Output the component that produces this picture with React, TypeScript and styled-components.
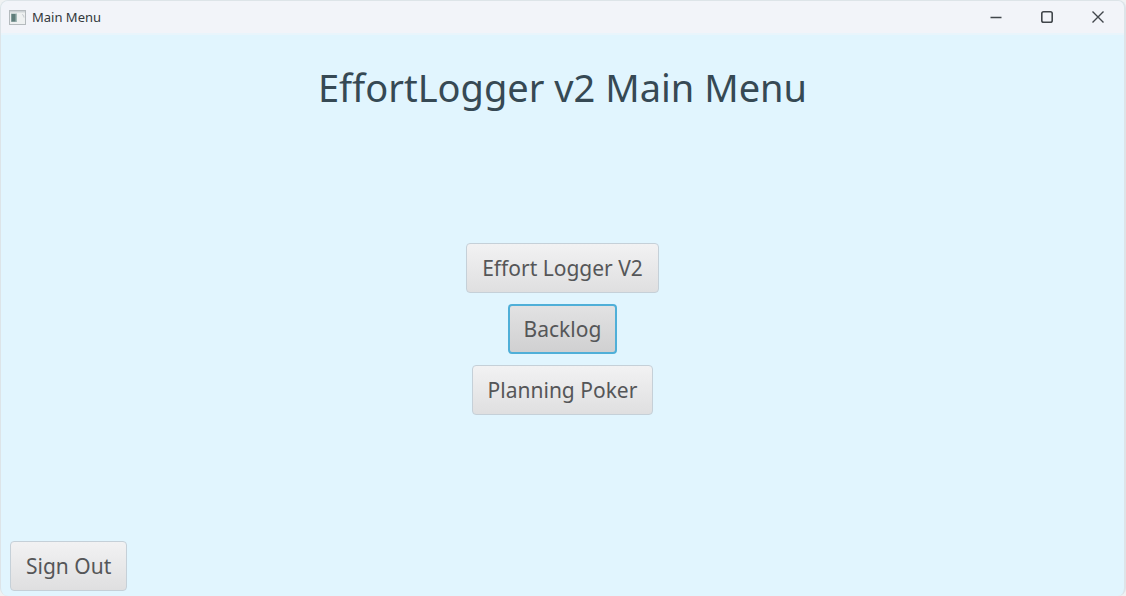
import React from "react";
import styled, { createGlobalStyle, css } from "styled-components";

const GlobalStyle = createGlobalStyle`
  * { box-sizing: border-box; }
  body {
    margin: 0;
    background: #f0f2f3;
    font-family: "Segoe UI", "Noto Sans", sans-serif;
  }
`;

const Window = styled.div`
  display: flex;
  flex-direction: column;
  min-height: 100vh;
  border: 1px solid #dde4e8;
  border-right-width: 2px;
  border-bottom: 0;
  border-radius: 8px;
  background: #e1f5fe;
  overflow: hidden;
`;

const TitleBar = styled.header`
  display: flex;
  align-items: center;
  justify-content: space-between;
  height: 32px;
  padding: 0 1px 0 8px;
  background: #f2f4f9;
`;

const Caption = styled.div`
  display: flex;
  align-items: center;
  gap: 6px;
  color: #33383c;
  font-size: 13px;
  line-height: 16px;
`;

const WindowControls = styled.div`
  display: flex;
  height: 100%;
`;

const ControlButton = styled.button`
  display: flex;
  align-items: center;
  justify-content: center;
  width: 51px;
  padding: 0;
  border: 0;
  background: transparent;
  color: #41464b;
`;

const Content = styled.main`
  display: flex;
  flex: 1;
  flex-direction: column;
  border-top: 2px solid #e9f5fc;
`;

const Heading = styled.h1`
  margin: 24px 0 0;
  color: #364954;
  font-size: 38px;
  font-weight: 400;
  line-height: 56px;
  text-align: center;
`;

const Menu = styled.nav`
  display: flex;
  flex: 1;
  flex-direction: column;
  align-items: center;
  justify-content: center;
  gap: 11px;
  padding-top: 2px;
`;

const MenuButton = styled.button<{ $active?: boolean }>`
  height: 50px;
  padding: 0 15px;
  border: 1px solid #c5d0d8;
  border-radius: 4px;
  background: linear-gradient(#f2f2f3, #dfdfe0);
  color: #555658;
  font-family: inherit;
  font-size: 21px;
  line-height: 28px;
  white-space: nowrap;
  ${({ $active }) =>
    $active &&
    css`
      border: 2px solid #4fafd8;
      padding: 0 14px;
      background: linear-gradient(#e2e2e3, #d0d0d1);
    `}
`;

const Footer = styled.footer`
  padding: 0 9px 5px;
`;

const AppIcon = () => (
  <svg width="17" height="15" viewBox="0 0 17 15" aria-hidden="true">
    <rect x="0.5" y="0.5" width="16" height="14" fill="#eef1f1" stroke="#b4babd" />
    <rect x="1" y="1" width="15" height="1.5" fill="#cdd3d6" />
    <rect x="2" y="3.5" width="6" height="8.5" fill="#a3b9b7" />
    <rect x="2.5" y="4" width="4" height="7.5" fill="#5f7d7a" />
    <path d="M13 4.5q2 0 2 3" fill="none" stroke="#c7ccd0" />
  </svg>
);

export default function App() {
  return (
    <>
      <GlobalStyle />
      <Window>
        <TitleBar>
          <Caption>
            <AppIcon />
            <span>Main Menu</span>
          </Caption>
          <WindowControls>
            <ControlButton aria-label="Minimize">
              <svg width="12" height="12" fill="none" stroke="currentColor" strokeWidth="1.4">
                <path d="M0.5 6.5h11" />
              </svg>
            </ControlButton>
            <ControlButton aria-label="Maximize">
              <svg width="12" height="12" fill="none" stroke="currentColor" strokeWidth="1.6">
                <rect x="0.8" y="0.8" width="10.4" height="10.4" rx="1.8" />
              </svg>
            </ControlButton>
            <ControlButton aria-label="Close">
              <svg width="12" height="12" fill="none" stroke="currentColor" strokeWidth="1.4">
                <path d="M0.5 0.5l11 11M11.5 0.5l-11 11" />
              </svg>
            </ControlButton>
          </WindowControls>
        </TitleBar>
        <Content>
          <Heading>EffortLogger v2 Main Menu</Heading>
          <Menu>
            <MenuButton>Effort Logger V2</MenuButton>
            <MenuButton $active>Backlog</MenuButton>
            <MenuButton>Planning Poker</MenuButton>
          </Menu>
          <Footer>
            <MenuButton>Sign Out</MenuButton>
          </Footer>
        </Content>
      </Window>
    </>
  );
}
